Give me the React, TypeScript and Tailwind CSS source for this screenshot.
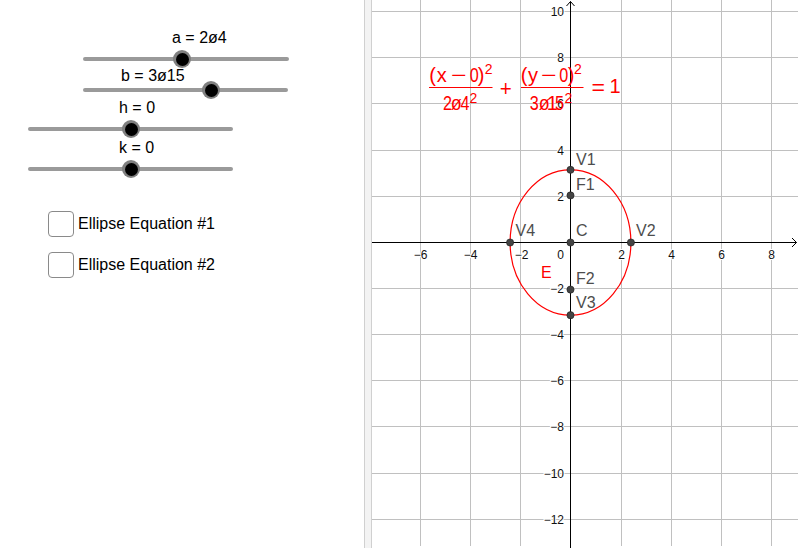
import React from "react";

const OX = 570.5;
const OY = 242.5;
const SX = 25.17;
const SY = 23.08;

const xGrid = [420.5, 470.5, 520.5, 621.5, 671.5, 721.5, 771.5];
const yGrid = [11.5, 57.5, 103.5, 150.5, 196.5, 288.5, 334.5, 380.5, 426.5, 473.5, 519.5];

const xLabels: [number, string][] = [
  [420.5, "−6"],
  [470.5, "−4"],
  [521.5, "−2"],
  [621.5, "2"],
  [671.5, "4"],
  [721.5, "6"],
  [771.5, "8"],
];
const yLabels: [number, string][] = [
  [11.5, "10"],
  [57.5, "8"],
  [103.5, "6"],
  [150.5, "4"],
  [196.5, "2"],
  [288.5, "−2"],
  [334.5, "−4"],
  [380.5, "−6"],
  [426.5, "−8"],
  [473.5, "−10"],
  [519.5, "−12"],
];

const c = Math.sqrt(3.15 * 3.15 - 2.4 * 2.4);
const points: [number, number][] = [
  [OX, OY - 3.15 * SY],
  [OX, OY - c * SY],
  [OX, OY],
  [OX + 2.4 * SX, OY],
  [OX - 2.4 * SX, OY],
  [OX, OY + c * SY],
  [OX, OY + 3.15 * SY],
];
const pointLabels: [number, number, string][] = [
  [576, 164.5, "V1"],
  [576, 189.5, "F1"],
  [576, 235.5, "C"],
  [636, 235.5, "V2"],
  [515.5, 235.5, "V4"],
  [576, 284, "F2"],
  [576, 308, "V3"],
];

function Knob({ left }: { left: string }) {
  return (
    <div
      className={`absolute top-1/2 ${left} -translate-x-1/2 -translate-y-1/2 w-[18px] h-[18px] rounded-full bg-[#808080] flex items-center justify-center`}
    >
      <div className="w-[13px] h-[13px] rounded-full bg-black" />
    </div>
  );
}

function Glyph({ x, y, t, size = 20, len }: { x: number; y: number; t: string; size?: number; len?: number }) {
  return (
    <text
      x={x}
      y={y}
      fontSize={size}
      textAnchor="middle"
      {...(len ? { textLength: len, lengthAdjust: "spacingAndGlyphs" } : {})}
    >
      {t}
    </text>
  );
}

export default function App() {
  return (
    <div className="flex w-[800px] h-[548px] bg-white overflow-hidden font-['Liberation_Sans',Arial,sans-serif] text-black">
      {/* Algebra / sliders panel */}
      <div className="w-[364px] h-full shrink-0 flex flex-col pt-[29px] text-[16px]">
        <div className="ml-[83px] w-[206px]">
          <div className="ml-[89px] h-[18px] leading-[18px]">a = 2ø4</div>
          <div className="relative mt-[10px] h-[4px] rounded-full bg-[#9a9a9a]">
            <Knob left="left-[99px]" />
          </div>
        </div>
        <div className="ml-[83px] w-[205px] mt-[6px]">
          <div className="ml-[38px] h-[18px] leading-[18px]">b = 3ø15</div>
          <div className="relative mt-[3px] h-[4px] rounded-full bg-[#9a9a9a]">
            <Knob left="left-[128px]" />
          </div>
        </div>
        <div className="ml-[28px] w-[205px] mt-[7px]">
          <div className="ml-[91px] h-[18px] leading-[18px]">h = 0</div>
          <div className="relative mt-[10px] h-[4px] rounded-full bg-[#9a9a9a]">
            <Knob left="left-[103px]" />
          </div>
        </div>
        <div className="ml-[28px] w-[205px] mt-[8px]">
          <div className="ml-[91px] h-[18px] leading-[18px]">k = 0</div>
          <div className="relative mt-[10px] h-[4px] rounded-full bg-[#9a9a9a]">
            <Knob left="left-[103px]" />
          </div>
        </div>

        <div className="ml-[48px] mt-[40px] flex items-center gap-[4px]">
          <div className="w-[26px] h-[26px] rounded-[4px] border border-[#8a8a8a] bg-white" />
          <span className="leading-[18px]">Ellipse Equation #1</span>
        </div>
        <div className="ml-[48px] mt-[15px] flex items-center gap-[4px]">
          <div className="w-[26px] h-[26px] rounded-[4px] border border-[#8a8a8a] bg-white" />
          <span className="leading-[18px]">Ellipse Equation #2</span>
        </div>
      </div>

      {/* Divider */}
      <div className="w-[8px] h-full shrink-0 bg-[#f3f3f3] border-x border-[#d0d0d0]" />

      {/* Graphics view */}
      <svg
        width={428}
        height={548}
        viewBox="372 0 428 548"
        className="block shrink-0"
        style={{ fontFamily: "'Liberation Sans', Arial, sans-serif" }}
      >
        <g stroke="#c0c0c0" strokeWidth={1}>
          {xGrid.map((x) => (
            <line key={"gx" + x} x1={x} y1={0} x2={x} y2={546} />
          ))}
          {yGrid.map((y) => (
            <line key={"gy" + y} x1={372} y1={y} x2={798} y2={y} />
          ))}
        </g>

        {/* axes */}
        <g stroke="#000" strokeWidth={1} fill="none">
          <line x1={372} y1={OY} x2={796.5} y2={OY} />
          <line x1={OX} y1={1.5} x2={OX} y2={548} />
          <polyline points="792,238 796.5,242.5 792,247" />
          <polyline points="566.5,6 570.5,1.5 574.5,6" />
        </g>

        {/* axis labels */}
        <g
          fontSize={12}
          fill="#111"
          stroke="#fff"
          strokeWidth={2}
          style={{ paintOrder: "stroke" }}
        >
          {xLabels.map(([x, t]) => (
            <text key={"xl" + t} x={x} y={258.5} textAnchor="middle">
              {t}
            </text>
          ))}
          <text x={560.5} y={258.5} textAnchor="middle">
            0
          </text>
          {yLabels.map(([y, t]) => (
            <text key={"yl" + t} x={564} y={y + 4.3} textAnchor="end">
              {t}
            </text>
          ))}
        </g>

        {/* ellipse */}
        <ellipse cx={OX} cy={OY} rx={2.4 * SX} ry={3.15 * SY} fill="none" stroke="#ff0000" strokeWidth={1.2} />

        {/* points */}
        {points.map(([x, y], i) => (
          <circle key={"p" + i} cx={x} cy={y} r={3.6} fill="#444" stroke="#1a1a1a" strokeWidth={0.6} />
        ))}
        <g fontSize={16} fill="#4d4d4d">
          {pointLabels.map(([x, y, t]) => (
            <text key={"pl" + t} x={x} y={y}>
              {t}
            </text>
          ))}
        </g>
        <text x={541} y={278} fontSize={16} fill="#ff0000">
          E
        </text>

        {/* equation */}
        <g fill="#ff0000">
          <Glyph x={432.5} y={81.5} t="(" />
          <Glyph x={441.7} y={81.5} t="x" />
          <Glyph x={458.8} y={81.5} t="−" len={15.5} />
          <Glyph x={474.2} y={81.5} t="0" len={9} />
          <Glyph x={481} y={81.5} t=")" />
          <Glyph x={488.7} y={74} t="2" size={14} />
          <line x1={429} y1={87.5} x2={492.5} y2={87.5} stroke="#ff0000" strokeWidth={1} />
          <Glyph x={447.5} y={110} t="2" size={20} len={9} />
          <Glyph x={456.3} y={110} t="ø" size={20} len={11} />
          <Glyph x={465} y={110} t="4" size={20} len={9} />
          <Glyph x={473.5} y={102.5} t="2" size={14} />

          <Glyph x={505.8} y={96} t="+" size={22} len={12} />

          <Glyph x={524.2} y={81.5} t="(" />
          <Glyph x={533} y={81.5} t="y" />
          <Glyph x={548.8} y={81.5} t="−" len={15.5} />
          <Glyph x={563.7} y={81.5} t="0" len={9} />
          <Glyph x={571.2} y={81.5} t=")" />
          <Glyph x={578} y={74} t="2" size={14} />
          <line x1={521} y1={87.5} x2={583.5} y2={87.5} stroke="#ff0000" strokeWidth={1} />
          <Glyph x={534.2} y={110} t="3" size={20} len={9} />
          <Glyph x={544.2} y={110} t="ø" size={20} len={11} />
          <Glyph x={552.3} y={110} t="1" size={20} />
          <Glyph x={559.4} y={110} t="5" size={20} len={9} />
          <Glyph x={568.5} y={102.5} t="2" size={14} />

          <Glyph x={598.3} y={95} t="=" size={22} len={13.5} />
          <Glyph x={615} y={93} t="1" size={20} />
        </g>
      </svg>
    </div>
  );
}
